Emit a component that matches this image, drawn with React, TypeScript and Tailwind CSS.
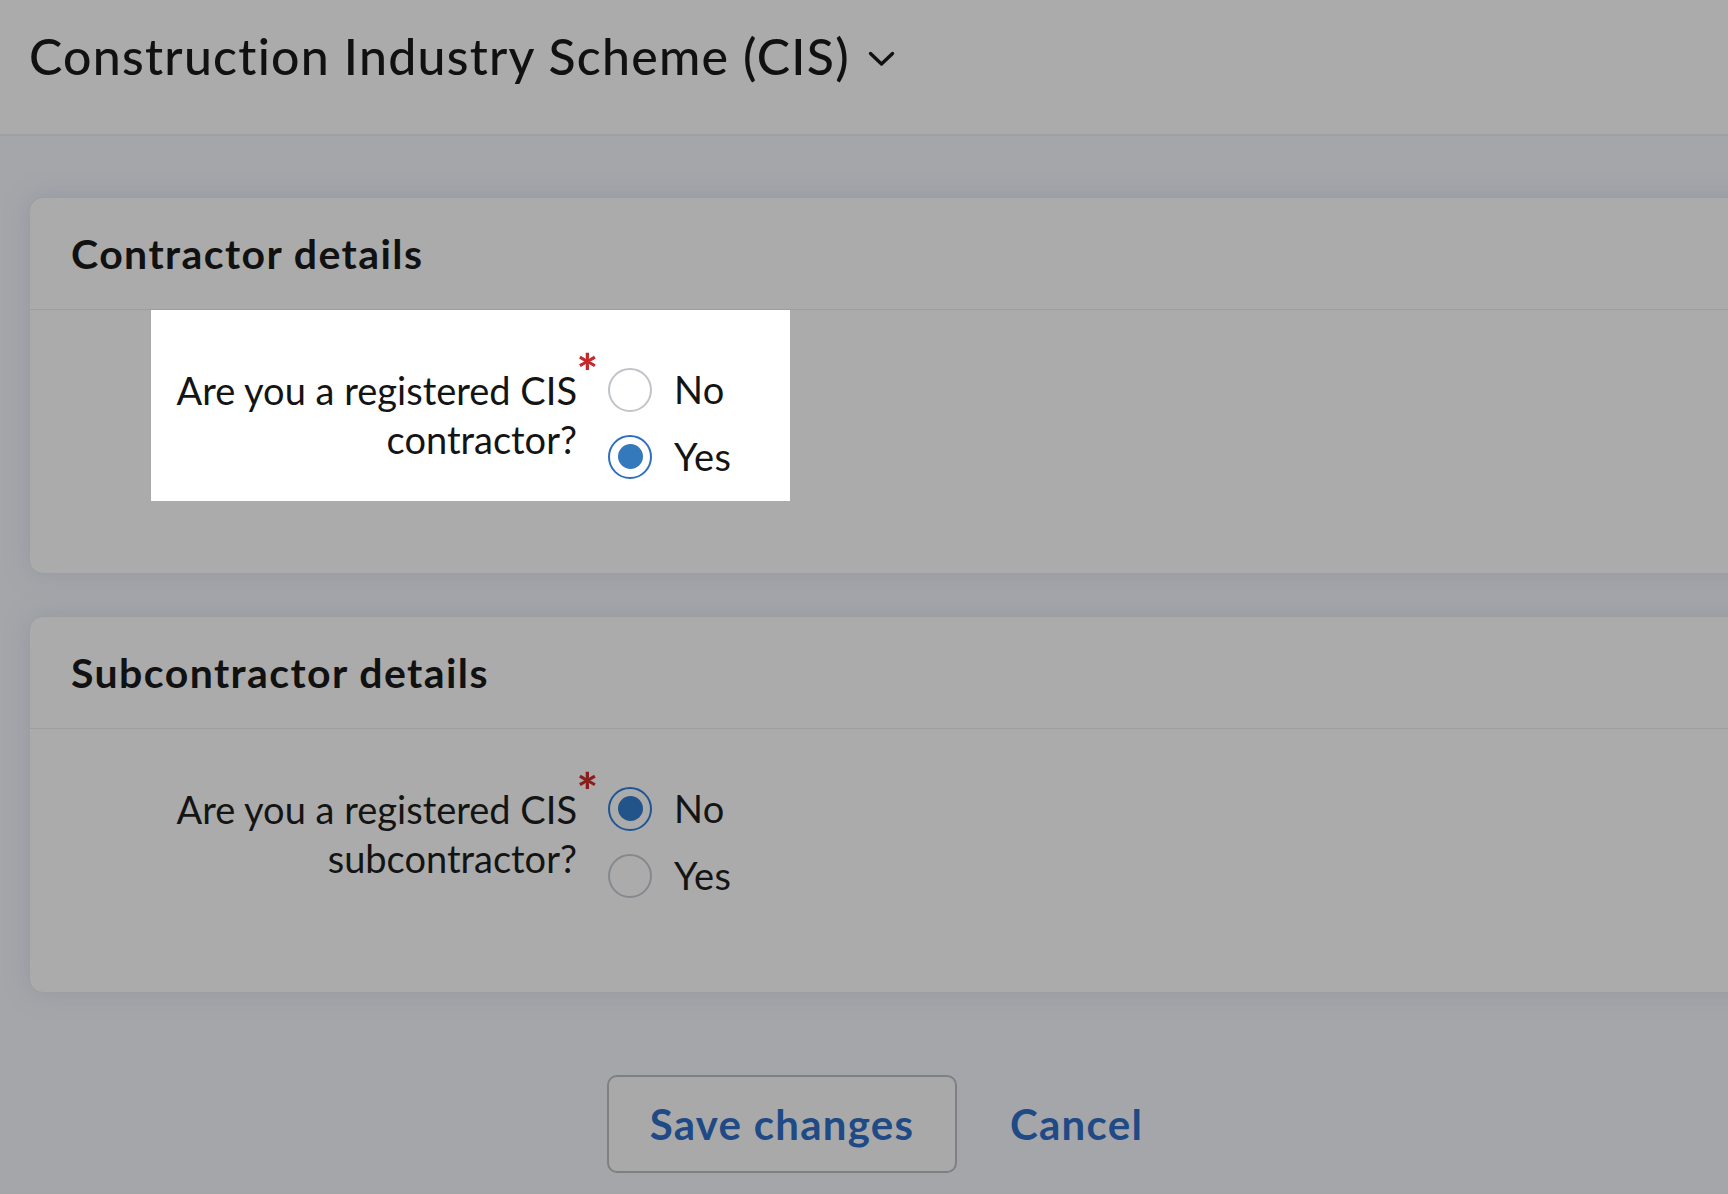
const font = { fontFamily: 'Lato, "Open Sans", sans-serif' };

interface RadioProps {
    label: string;
    checked: boolean;
    dimmed: boolean;
}

function Radio({ label, checked, dimmed }: RadioProps) {
    const ring = checked
        ? dimmed ? 'border-[#1f5495]' : 'border-[#2f6fc0]'
        : dimmed ? 'border-[#85898d]' : 'border-[#c0c4c8]';
    const dot = dimmed ? 'bg-[#22548a]' : 'bg-[#3579bd]';

    return (
        <div className="flex items-center h-[67px]">
            <span className={`w-[44px] h-[44px] rounded-full border-2 ${ring} flex items-center justify-center shrink-0`}>
                {checked && <span className={`w-[25px] h-[25px] rounded-full ${dot}`} />}
            </span>
            <span className="ml-[22px] text-[38px] leading-[49px] tracking-[0.01em] text-[#141414]">{label}</span>
        </div>
    );
}

interface QuestionProps {
    last: string;
    answer: 'No' | 'Yes';
    highlighted: boolean;
}

function Question({ last, answer, highlighted }: QuestionProps) {
    return (
        <div className={`flex items-start h-[191px] w-[639px] pl-[6px] ${highlighted ? 'bg-white' : ''}`}>
            {/* label column, right aligned */}
            <div className="relative w-[420px] mt-[56px] text-right text-[38px] leading-[49px] text-[#141414] whitespace-nowrap">
                Are you a registered CIS
                <br />
                {last}
                <span className={`absolute -right-[21px] -top-[19px] text-[50px] leading-none font-black ${highlighted ? 'text-[#c42a2a]' : 'text-[#8a1c1c]'}`}>*</span>
            </div>
            <div className="ml-[31px] mt-[46px] flex flex-col">
                <Radio label="No" checked={answer === 'No'} dimmed={!highlighted} />
                <Radio label="Yes" checked={answer === 'Yes'} dimmed={!highlighted} />
            </div>
        </div>
    );
}

function Card({ title, children }: { title: string; children: React.ReactNode }) {
    return (
        <div className="bg-[#ababab] border border-[#9c9ea2] rounded-[14px] -mr-8 shadow-[0_0_24px_rgba(120,128,140,0.35)]">
            <div className="h-[112px] flex items-center pl-[41px] border-b border-[#9c9ea2]">
                <h2 className="text-[41px] leading-[48px] font-bold tracking-[0.035em] text-[#111111]">{title}</h2>
            </div>
            <div className="h-[263px] pl-[121px]">{children}</div>
        </div>
    );
}

export default function App() {
    return (
        <div className="min-h-screen w-full overflow-hidden bg-[#a4a6aa]" style={font}>
            <header className="h-[136px] bg-[#ababab] border-b-2 border-[#9fa0a3] px-[29px] pt-[26px]">
                <div className="flex items-center">
                    <h1 className="text-[50px] leading-[60px] font-medium tracking-[0.025em] text-[#111111]">
                        Construction Industry Scheme (CIS)
                    </h1>
                    <svg className="ml-[18px] mt-[5px]" width="27" height="16" viewBox="0 0 27 16" fill="none">
                        <polyline points="2.5,2.5 13.5,13 24.5,2.5" stroke="#111111" strokeWidth="3.4" strokeLinecap="round" strokeLinejoin="round" />
                    </svg>
                </div>
            </header>

            <main className="pl-[29px] pt-[61px] flex flex-col gap-[42px]">
                <Card title="Contractor details">
                    <Question last="contractor?" answer="Yes" highlighted />
                </Card>
                <Card title="Subcontractor details">
                    <Question last="subcontractor?" answer="No" highlighted={false} />
                </Card>
            </main>

            <div className="flex items-center pl-[607px] pt-[82px] pb-[40px]">
                <button className="w-[350px] h-[98px] rounded-[10px] border-2 border-[#7f8083] bg-[#a9a9a9] text-[42px] font-bold tracking-[0.03em] text-[#1f4a85]">
                    Save changes
                </button>
                <button className="ml-[53px] text-[42px] font-bold tracking-[0.03em] text-[#1f4a85]">Cancel</button>
            </div>
        </div>
    );
}
